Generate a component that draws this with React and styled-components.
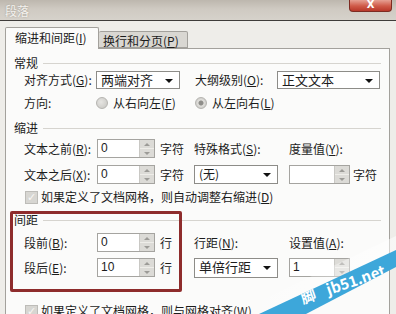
import React from "react";
import styled, { createGlobalStyle } from "styled-components";

const GlobalStyle = createGlobalStyle`
  html, body { margin: 0; padding: 0; background: #ecebe7; }
  body { font-family: "Noto Sans CJK SC", "DejaVu Sans", sans-serif; font-size: 12px; color: #1c1c1c; }
`;

const Window = styled.div`
  position: relative;
  width: 396px;
  height: 314px;
  overflow: hidden;
  background: #eeede9;
`;

const TitleBar = styled.div`
  height: 20px;
  display: flex;
  justify-content: space-between;
  align-items: flex-start;
  background: linear-gradient(to bottom, #bdb7ae 0%, #cfcac2 45%, #d6d2cb 100%);
  border-bottom: 1px solid #3e3c3a;
`;

const Title = styled.div`
  padding: 3px 0 0 5px;
  line-height: 16px;
  font-size: 12px;
  color: #f4f2ee;
  text-shadow: 0 0 2px #9a948a;
`;

const CloseButton = styled.div`
  width: 41px;
  height: 11px;
  margin-right: 4px;
  border: 1px solid #7d2b22;
  border-top: none;
  border-radius: 0 0 4px 4px;
  background: linear-gradient(to bottom, #e6a093 0%, #cf5a48 55%, #b8382a 100%);
  color: #fff;
  font-family: "DejaVu Sans", sans-serif;
  font-weight: bold;
  font-size: 10px;
  line-height: 10px;
  text-align: center;
`;

const Body = styled.div`
  padding: 0 6px 0 5px;
`;

const TabStrip = styled.div`
  height: 27px;
  display: flex;
  align-items: flex-end;
  position: relative;
  z-index: 1;
`;

const Tab = styled.div`
  box-sizing: border-box;
  height: ${(p) => (p.$active ? "22px" : "17px")};
  margin-bottom: ${(p) => (p.$active ? "-1px" : "0")};
  width: ${(p) => p.$w}px;
  padding: ${(p) => (p.$active ? "2px 0 0 9px" : "1px 0 0 4px")};
  line-height: 16px;
  background: ${(p) => (p.$active ? "#fbfbfa" : "#d9d7d2")};
  border: 1px solid #a3a19c;
  border-bottom: ${(p) => (p.$active ? "none" : "1px solid #a3a19c")};
  border-radius: 2px 2px 0 0;
  ${(p) => (p.$active ? "" : "border-left: none;")}
`;

const Panel = styled.div`
  box-sizing: border-box;
  width: 385px;
  height: 280px;
  background: #fbfbfa;
  border: 1px solid #a3a19c;
  border-bottom: none;
`;

const Header = styled.div`
  display: flex;
  align-items: center;
  height: 16px;
  margin-top: ${(p) => p.$mt}px;
  padding: 0 8px 0 8px;
  line-height: 16px;
  &::after {
    content: "";
    flex: 1;
    height: 1px;
    margin-left: 5px;
    background: #d6d4cf;
  }
`;

const Row = styled.div`
  display: flex;
  align-items: center;
  height: ${(p) => p.$h}px;
  margin-top: ${(p) => p.$mt}px;
  padding-left: 18px;
  white-space: nowrap;
`;

const Label = styled.div`
  width: ${(p) => (p.$w ? `${p.$w}px` : "auto")};
  margin-left: ${(p) => p.$ml || 0}px;
  flex-shrink: 0;
  line-height: 16px;
  color: #1c1c1c;
`;

const Key = styled.span`
  text-decoration: underline;
  text-underline-offset: 1px;
`;

const SelectBox = styled.div`
  box-sizing: border-box;
  position: relative;
  width: ${(p) => p.$w}px;
  height: ${(p) => p.$h || 18}px;
  margin-left: ${(p) => p.$ml || 0}px;
  flex-shrink: 0;
  padding-left: 4px;
  line-height: 16px;
  background: #fff;
  border: 1px solid #8d8c88;
  font-size: ${(p) => (p.$big ? "13px" : "12px")};
  &::after {
    content: "";
    position: absolute;
    right: 6px;
    top: 7px;
    border-left: 4px solid transparent;
    border-right: 4px solid transparent;
    border-top: 4px solid #111;
  }
`;

const SpinBox = styled.div`
  box-sizing: border-box;
  display: flex;
  width: ${(p) => p.$w}px;
  height: 19px;
  margin-left: ${(p) => p.$ml || 0}px;
  flex-shrink: 0;
  background: #fff;
  border: 1px solid #a5a4a0;
`;

const SpinValue = styled.div`
  flex: 1;
  padding-left: 3px;
  line-height: 17px;
  font-family: "Liberation Sans", sans-serif;
  font-size: 12px;
`;

const SpinButtons = styled.div`
  width: 14px;
  display: flex;
  flex-direction: column;
  border-left: 1px solid #c9c8c4;
  background: #dcdbd7;
`;

const SpinArrow = styled.div`
  flex: 1;
  display: flex;
  align-items: center;
  justify-content: center;
  &::before {
    content: "";
    border-left: 3px solid transparent;
    border-right: 3px solid transparent;
    ${(p) => (p.$down ? "border-top: 3px solid #9c9b97;" : "border-bottom: 3px solid #9c9b97;")}
  }
  & + & {
    border-top: 1px solid #eeede9;
  }
`;

const Radio = styled.div`
  width: 10px;
  height: 10px;
  margin-right: 5px;
  flex-shrink: 0;
  border-radius: 50%;
  border: 1px solid #b5b4b0;
  background: ${(p) =>
    p.$checked
      ? "radial-gradient(circle, #8f8e8a 0 2px, #e2e1dd 3px, #cfcecb 5px)"
      : "radial-gradient(circle at 40% 40%, #e6e5e2, #c6c5c1)"};
`;

const CheckBox = styled.div`
  box-sizing: border-box;
  width: 13px;
  height: 13px;
  margin: 0 3px 0 1px;
  flex-shrink: 0;
  background: #d7d6d2;
  border: 1px solid #bdbcb8;
  color: #f7f7f5;
  font-family: "DejaVu Sans", sans-serif;
  font-size: 11px;
  font-weight: bold;
  line-height: 11px;
  text-align: center;
`;

const Spacing = styled.div`
  position: relative;
`;

const RedBox = styled.div`
  position: absolute;
  left: 4px;
  top: -1px;
  width: 172px;
  height: 81px;
  box-sizing: border-box;
  border: 3px solid #8e2c2c;
  border-radius: 2px;
  pointer-events: none;
`;

const Watermark = styled.svg`
  position: absolute;
  left: 0;
  top: 0;
  pointer-events: none;
`;

const K = ({ c }) => (
  <>
    (<Key>{c}</Key>)
  </>
);

const Spin = ({ value, w = 58, ml }) => (
  <SpinBox $w={w} $ml={ml}>
    <SpinValue>{value}</SpinValue>
    <SpinButtons>
      <SpinArrow />
      <SpinArrow $down />
    </SpinButtons>
  </SpinBox>
);

export default function App() {
  return (
    <>
      <GlobalStyle />
      <Window>
        <TitleBar>
          <Title>段落</Title>
          <CloseButton>X</CloseButton>
        </TitleBar>
        <Body>
          <TabStrip>
            <Tab $active $w={94}>
              缩进和间距<K c="I" />
            </Tab>
            <Tab $w={89}>
              换行和分页<K c="P" />
            </Tab>
          </TabStrip>
          <Panel>
            <Header $mt={6}>常规</Header>
            <Row $h={18} $mt={0}>
              <Label $w={72}>
                对齐方式<K c="G" />:
              </Label>
              <SelectBox $w={84} $big>两端对齐</SelectBox>
              <Label $w={82} $ml={15}>
                大纲级别<K c="O" />:
              </Label>
              <SelectBox $w={103} $big>正文文本</SelectBox>
            </Row>
            <Row $h={20} $mt={4}>
              <Label $w={72}>方向:</Label>
              <Radio />
              <Label $w={82}>
                从右向左<K c="F" />
              </Label>
              <Radio $checked />
              <Label>
                从左向右<K c="L" />
              </Label>
            </Row>

            <Header $mt={7}>缩进</Header>
            <Row $h={19} $mt={3}>
              <Label $w={73}>
                文本之前<K c="R" />:
              </Label>
              <Spin value="0" />
              <Label $w={34} $ml={5}>字符</Label>
              <Label $w={95}>
                特殊格式<K c="S" />:
              </Label>
              <Label>
                度量值<K c="Y" />:
              </Label>
            </Row>
            <Row $h={19} $mt={7}>
              <Label $w={73}>
                文本之后<K c="X" />:
              </Label>
              <Spin value="0" />
              <Label $w={34} $ml={5}>字符</Label>
              <SelectBox $w={84} $h={19}>(无)</SelectBox>
              <Spin value="" w={61} ml={11} />
              <Label $ml={3}>字符</Label>
            </Row>
            <Row $h={16} $mt={5}>
              <CheckBox>✓</CheckBox>
              <Label>
                如果定义了文档网格，则自动调整右缩进<K c="D" />
              </Label>
            </Row>

            <Spacing>
              <Header $mt={7}>间距</Header>
              <Row $h={19} $mt={5}>
                <Label $w={73}>
                  段前<K c="B" />:
                </Label>
                <Spin value="0" />
                <Label $w={34} $ml={5}>行</Label>
                <Label $w={95}>
                  行距<K c="N" />:
                </Label>
                <Label>
                  设置值<K c="A" />:
                </Label>
              </Row>
              <Row $h={19} $mt={6}>
                <Label $w={73}>
                  段后<K c="E" />:
                </Label>
                <Spin value="10" />
                <Label $w={34} $ml={5}>行</Label>
                <SelectBox $w={84} $h={20} $big>单倍行距</SelectBox>
                <Spin value="1" w={61} ml={11} />
              </Row>
              <RedBox />
            </Spacing>
            <Row $h={16} $mt={26}>
              <CheckBox>✓</CheckBox>
              <Label>
                如果定义了文档网格，则与网格对齐<K c="W" />
              </Label>
            </Row>
          </Panel>
        </Body>
        <Watermark width="396" height="314" viewBox="0 0 396 314">
          <defs>
            <linearGradient id="glow" x1="0" y1="0" x2="1" y2="0">
              <stop offset="0" stopColor="#ffffff" stopOpacity="0" />
              <stop offset="1" stopColor="#ffffff" stopOpacity="0.9" />
            </linearGradient>
            <clipPath id="band">
              <polygon points="259,314 396,250 396,267 306,314" />
            </clipPath>
          </defs>
          <polygon points="232,314 396,236 396,251 259,314" fill="url(#glow)" opacity="0.6" />
          <polygon points="259,314 396,250 396,267 306,314" fill="#3da7da" />
          <g clipPath="url(#band)">
            <text
              x="303"
              y="304"
              fill="#ffffff"
              fontSize="15"
              fontWeight="bold"
              fontFamily="Noto Sans CJK SC, sans-serif"
              transform="rotate(-19 303 304)"
            >
              脚<tspan dx="12">jb51.net</tspan>
            </text>
          </g>
        </Watermark>
      </Window>
    </>
  );
}
